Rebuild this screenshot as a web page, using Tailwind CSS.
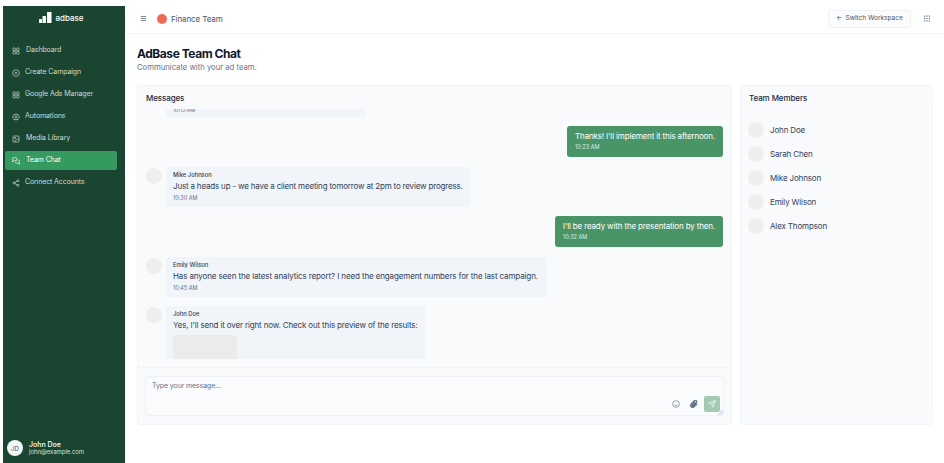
<!DOCTYPE html>
<html lang="en"><head><meta charset="utf-8"><title>AdBase Team Chat</title>
<script src="https://cdn.jsdelivr.net/npm/@tailwindcss/browser@4"></script></head>
<body class="bg-white font-['Inter',sans-serif] text-[#0f172a] overflow-hidden">
<div class="w-[944px] h-[463px] pl-[3px] pt-[6px] flex overflow-hidden">
<aside class="w-[122px] h-[457px] shrink-0 bg-[#1a4530] text-[#cfdcd5] flex flex-col">
 <div class="h-[23px] flex items-center justify-center gap-[3px] pr-[5px]">
  <svg width="13" height="11" viewBox="0 0 13 11" fill="#fff"><rect x="0" y="7" width="3" height="4" rx=".5"/><rect x="3.5" y="4" width="3.5" height="7" rx=".5"/><rect x="8" y="0" width="4.5" height="11" rx=".5"/></svg>
  <span class="text-[8px] font-medium text-white">adbase</span>
 </div>
 <nav class="mt-[12px] flex flex-col gap-[3px] pl-[2px] pr-[8px] text-[7px] tracking-[-0.1px]">
  <a class="h-[19px] flex items-center gap-[6px] pl-[7px]"><svg class="w-[8px] h-[8px]" viewBox="0 0 24 24" fill="none" stroke="currentColor" stroke-width="2"><rect x="3" y="3" width="7" height="8" rx="1"/><rect x="14" y="3" width="7" height="8" rx="1"/><rect x="14" y="13" width="7" height="8" rx="1"/><rect x="3" y="13" width="7" height="8" rx="1"/></svg>Dashboard</a>
  <a class="h-[19px] flex items-center gap-[5px] pl-[7px]"><svg class="w-[8px] h-[8px]" viewBox="0 0 24 24" fill="none" stroke="currentColor" stroke-width="2"><circle cx="12" cy="12" r="10"/><path d="M8 12h8M12 8v8"/></svg>Create Campaign</a>
  <a class="h-[19px] flex items-center gap-[5px] pl-[7px]"><svg class="w-[8px] h-[8px]" viewBox="0 0 24 24" fill="none" stroke="currentColor" stroke-width="2"><rect x="3" y="3" width="7" height="8" rx="1"/><rect x="14" y="3" width="7" height="8" rx="1"/><rect x="14" y="13" width="7" height="8" rx="1"/><rect x="3" y="13" width="7" height="8" rx="1"/></svg>Google Ads Manager</a>
  <a class="h-[19px] flex items-center gap-[5px] pl-[7px]"><svg class="w-[8px] h-[8px]" viewBox="0 0 24 24" fill="none" stroke="currentColor" stroke-width="2"><circle cx="12" cy="12" r="3"/><path d="M12 2l2 3 4-1 1 4 3 2-2 2 2 2-3 2-1 4-4-1-2 3-2-3-4 1-1-4-3-2 2-2-2-2 3-2 1-4 4 1z"/></svg>Automations</a>
  <a class="h-[19px] flex items-center gap-[6px] pl-[7px]"><svg class="w-[8px] h-[8px]" viewBox="0 0 24 24" fill="none" stroke="currentColor" stroke-width="2"><rect x="3" y="3" width="18" height="18" rx="2"/><circle cx="9" cy="9" r="2"/><path d="M21 15l-4-4L6 21"/></svg>Media Library</a>
  <a class="h-[19px] flex items-center gap-[6px] pl-[7px] bg-[#349a5f] rounded-[2px] text-white"><svg class="w-[8px] h-[8px]" viewBox="0 0 24 24" fill="none" stroke="currentColor" stroke-width="2"><path d="M14 9a2 2 0 0 1-2 2H6l-4 4V4a2 2 0 0 1 2-2h8a2 2 0 0 1 2 2z"/><path d="M18 9h2a2 2 0 0 1 2 2v11l-4-4h-6a2 2 0 0 1-2-2v-1"/></svg>Team Chat</a>
  <a class="h-[19px] flex items-center gap-[5px] pl-[7px]"><svg class="w-[8px] h-[8px]" viewBox="0 0 24 24" fill="none" stroke="currentColor" stroke-width="2"><circle cx="18" cy="5" r="3"/><circle cx="6" cy="12" r="3"/><circle cx="18" cy="19" r="3"/><path d="M8.6 13.5l6.8 4M15.4 6.5l-6.8 4"/></svg>Connect Accounts</a>
 </nav>
 <div class="mt-auto h-[30px] flex items-center gap-[6px] pl-[4px]">
  <div class="w-[16px] h-[16px] rounded-full bg-[#f4f5f7] text-[#475569] text-[6px] flex items-center justify-center">JD</div>
  <div class="leading-none"><div class="text-[7px] font-medium text-white">John Doe</div><div class="text-[6px] mt-[1px] tracking-[-0.05px] text-[#d5e0da]">john@example.com</div></div>
 </div>
</aside>
<div class="flex-1 min-w-0 flex flex-col">
 <header class="h-[28px] flex items-center border-b border-[#f1f5f9] pl-[15px] pr-[14px] pb-[2px]">
  <svg class="w-[7px] h-[7px] text-[#475569]" viewBox="0 0 24 24" fill="none" stroke="currentColor" stroke-width="2.5"><path d="M3 5h18M3 12h18M3 19h18"/></svg>
  <span class="ml-[10px] w-[10px] h-[10px] rounded-full bg-[#ef6a53]"></span>
  <span class="ml-[4px] text-[8px] tracking-[-0.1px] text-[#475569]">Finance Team</span>
  <button class="ml-auto h-[18px] w-[83px] rounded-[2px] border border-[#eef1f6] bg-[#fbfcfd] text-[6.5px] text-[#475569] flex items-center justify-center gap-[3px]"><span>←</span>Switch Workspace</button>
  <svg class="ml-[13px] w-[6px] h-[7px] text-[#64748b]" viewBox="0 0 7 7" fill="currentColor"><rect x="0" y="0" width="1.4" height="1.4"/><rect x="2.8" y="0" width="1.4" height="1.4"/><rect x="5.6" y="0" width="1.4" height="1.4"/><rect x="0" y="2.8" width="1.4" height="1.4"/><rect x="2.8" y="2.8" width="1.4" height="1.4"/><rect x="5.6" y="2.8" width="1.4" height="1.4"/><rect x="0" y="5.6" width="1.4" height="1.4"/><rect x="2.8" y="5.6" width="1.4" height="1.4"/><rect x="5.6" y="5.6" width="1.4" height="1.4"/></svg>
 </header>
 <main class="pl-[12px] pr-[11px] flex-1">
  <h1 class="mt-[11px] mb-[1px] text-[12px] leading-[17px] font-bold tracking-[-0.45px] text-[#0f172a]">AdBase Team Chat</h1>
  <p class="text-[7.7px] leading-[10px] text-[#64748b]">Communicate with your ad team.</p>
  <div class="mt-[12px] flex gap-[8px] h-[340px]">
   <section class="w-[595px] rounded-[3px] border border-[#f1f4f8] bg-[#f9fafc] flex flex-col">
    <h2 class="h-[23px] pl-[8px] pt-[7px] text-[8px] leading-[10px] font-medium tracking-[-0.1px] text-[#1e293b]">Messages</h2>
    <div class="h-[250px] overflow-hidden px-[8px] flex flex-col gap-[9.5px] text-[8px] tracking-[-0.15px]">
     <div class="ml-[20px] w-[200px] h-[20px] -mt-[12.5px] shrink-0 rounded-[3px] bg-[#f1f4f9] px-[7px] pt-[9px] text-[5.5px] text-[#64748b]">10:15 AM</div>
     <div class="self-end shrink-0 rounded-[3px] bg-[#4a9568] text-white px-[8px] h-[31px] pt-[5px]"><p class="leading-[10px]">Thanks! I'll implement it this afternoon.</p><p class="text-[5.5px] leading-[7px] mt-[3px] tracking-normal text-[#dcebe2]">10:23 AM</p></div>
     <div class="flex gap-[4px] shrink-0"><div class="w-[16px] h-[16px] rounded-full bg-[#eeeeee] mt-[1px]"></div><div class="rounded-[3px] bg-[#f1f4f9] h-[40px] px-[7px] pt-[4px]"><p class="text-[5.8px] leading-[7px] tracking-normal font-medium text-[#334155]">Mike Johnson</p><p class="leading-[12px] mt-[2px] tracking-[-0.18px] text-[#334155]">Just a heads up - we have a client meeting tomorrow at 2pm to review progress.</p><p class="text-[5.5px] leading-[7px] mt-[3px] tracking-normal text-[#64748b]">10:30 AM</p></div></div>
     <div class="self-end shrink-0 rounded-[3px] bg-[#4a9568] text-white px-[8px] h-[31px] pt-[5px]"><p class="leading-[10px]">I'll be ready with the presentation by then.</p><p class="text-[5.5px] leading-[7px] mt-[3px] tracking-normal text-[#dcebe2]">10:32 AM</p></div>
     <div class="flex gap-[4px] shrink-0"><div class="w-[16px] h-[16px] rounded-full bg-[#eeeeee] mt-[1px]"></div><div class="rounded-[3px] bg-[#f1f4f9] h-[40px] pl-[7px] pr-[9px] pt-[4px]"><p class="text-[5.8px] leading-[7px] tracking-normal font-medium text-[#334155]">Emily Wilson</p><p class="leading-[12px] mt-[2px] tracking-[-0.12px] text-[#334155]">Has anyone seen the latest analytics report? I need the engagement numbers for the last campaign.</p><p class="text-[5.5px] leading-[7px] mt-[3px] tracking-normal text-[#64748b]">10:45 AM</p></div></div>
     <div class="flex gap-[4px] shrink-0"><div class="w-[16px] h-[16px] rounded-full bg-[#eeeeee] mt-[1px]"></div><div class="rounded-[3px] bg-[#f1f4f9] px-[7px] pt-[4px] pb-[8px]"><p class="text-[5.8px] leading-[7px] tracking-normal font-medium text-[#334155]">John Doe</p><p class="leading-[12px] mt-[2px] text-[#334155]">Yes, I'll send it over right now. Check out this preview of the results:</p><div class="mt-[4px] w-[64px] h-[64px] rounded-[2px] bg-[#ebebeb]"></div></div></div>
    </div>
    <div class="flex-1 border-t border-[#f0f3f7] mt-[8px] px-[7px] pt-[8px]">
     <div class="relative h-[40px] rounded-[3px] border border-[#eef1f5] bg-[#fafbfd] pl-[6px] pt-[4px] text-[7px] tracking-[-0.1px] text-[#64748b]">Type your message...
      <div class="absolute right-[3px] bottom-[3px] flex items-center">
       <svg class="w-[8px] h-[8px] text-[#64748b]" viewBox="0 0 24 24" fill="none" stroke="currentColor" stroke-width="2"><circle cx="12" cy="12" r="10"/><path d="M8 15s1.5 2 4 2 4-2 4-2M9 9h.01M15 9h.01"/></svg>
       <svg class="ml-[10px] w-[8px] h-[8px] text-[#64748b]" viewBox="0 0 24 24" fill="none" stroke="currentColor" stroke-width="4"><path d="M21.4 11l-9.2 9.2a6 6 0 0 1-8.5-8.5l9.2-9.2a4 4 0 0 1 5.7 5.7l-9.2 9.2a2 2 0 0 1-2.8-2.8l8.5-8.5"/></svg>
       <div class="ml-[6px] w-[16px] h-[16px] rounded-[2px] bg-[#a2cbb1] flex items-center justify-center"><svg class="w-[8px] h-[8px] text-white" viewBox="0 0 24 24" fill="none" stroke="currentColor" stroke-width="2"><path d="M22 2L11 13M22 2l-7 20-4-9-9-4z"/></svg></div>
      </div>
      <svg class="absolute right-0 bottom-0 w-[5px] h-[5px] text-[#94a3b8]" viewBox="0 0 5 5" fill="none" stroke="currentColor" stroke-width=".6"><path d="M0 5L5 0M2.5 5L5 2.5"/></svg>
     </div>
    </div>
   </section>
   <section class="w-[193px] rounded-[3px] border border-[#f1f4f8] bg-[#f9fafc] pl-[7px]">
    <h2 class="pl-[1px] pt-[7px] text-[8px] leading-[10px] font-medium tracking-[-0.1px] text-[#1e293b]">Team Members</h2>
    <ul class="mt-[19px] flex flex-col gap-[8px] text-[8px] tracking-[-0.15px] text-[#334155]">
     <li class="flex items-center gap-[6px] h-[16px]"><span class="w-[16px] h-[16px] rounded-full bg-[#eeeeee]"></span>John Doe</li>
     <li class="flex items-center gap-[6px] h-[16px]"><span class="w-[16px] h-[16px] rounded-full bg-[#eeeeee]"></span>Sarah Chen</li>
     <li class="flex items-center gap-[6px] h-[16px]"><span class="w-[16px] h-[16px] rounded-full bg-[#eeeeee]"></span>Mike Johnson</li>
     <li class="flex items-center gap-[6px] h-[16px]"><span class="w-[16px] h-[16px] rounded-full bg-[#eeeeee]"></span>Emily Wilson</li>
     <li class="flex items-center gap-[6px] h-[16px]"><span class="w-[16px] h-[16px] rounded-full bg-[#eeeeee]"></span>Alex Thompson</li>
    </ul>
   </section>
  </div>
 </main>
</div>
</div>
</body></html>
